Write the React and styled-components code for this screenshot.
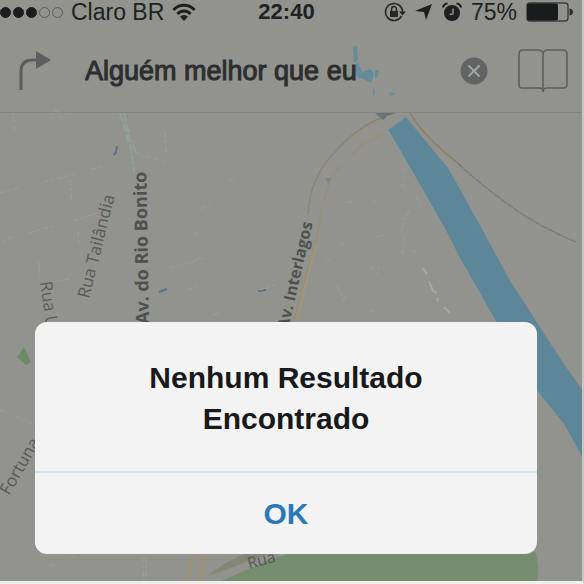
import React, { useState } from "react";
import styled, { createGlobalStyle } from "styled-components";

const signalDots = [true, true, true, false, false];

const faintStreets = [
  "M0 193 L20 188 M44 182 L76 174 M92 169 L106 166",
  "M30 233 L58 225 M74 221 L104 211",
  "M14 237 L2 242 M52 282 L70 279 M170 268 L194 262",
  "M71 180 L73 202 M79 232 L80 246 M166 132 L167 152",
  "M40 262 L41 278 M14 112 L16 130",
  "M50 118 l5 -6 l4 2 l3 4 l5 -4",
  "M58 112 l-3 -3 l5 2",
  "M202 209 l10 -4 M230 181 l8 -4 M196 232 l3 4 M194 261 l12 -3",
  "M214 315 l8 -2 M260 290 l16 -5 M188 290 l10 -4",
  "M374 202 l4 -2 M348 203 l6 -2 M376 237 l14 -3 M372 266 l6 8 l2 -7",
  "M338 286 l6 14 l4 -6 M327 258 l4 2 M342 246 l3 -4",
  "M404 168 l3 14 M402 184 l4 4 M410 210 l-8 20 l4 10 l-3 14",
  "M417 196 l6 12 M412 251 l6 1 M0 410 l8 2",
  "M16 416 l20 10 M143 557 l2 24 l4 0 M147 557 l0 20",
  "M370 310 l8 2 M50 566 l10 -2 M72 557 l8 -1",
];

const StatusBar = () => (
  <StatusRow>
    <StatusGroup>
      <Dots>
        {signalDots.map((filled, i) => (
          <Dot key={i} $filled={filled} />
        ))}
      </Dots>
      <span>Claro BR</span>
      <svg width="24" height="18" viewBox="0 0 24 18" fill="none" stroke="#1d1f20" strokeWidth="3">
        <path d="M1.500 7 C7 .8 17 .8 22.500 7" />
        <path d="M5.500 11 C9 7 15 7 18.500 11" />
        <path d="M8 13.500 Q12 10.500 16 13.500 L12 18 Z" fill="#1d1f20" stroke="none" />
      </svg>
    </StatusGroup>
    <Clock>22:40</Clock>
    <StatusGroup $end>
      <svg width="22" height="20" viewBox="0 0 22 20" fill="none" stroke="#252728">
        <path d="M17.500 14 A8.500 8.500 0 1 1 18.500 10" strokeWidth="1.600" />
        <path d="M15 9.500 h7 l-3.500 4 z" fill="#252728" stroke="none" />
        <rect x="6" y="9" width="8" height="6" fill="#252728" stroke="none" />
        <path d="M7.600 9 V7 a2.400 2.400 0 0 1 4.800 0 V9" strokeWidth="1.500" />
      </svg>
      <svg width="18" height="18" viewBox="0 0 18 18">
        <path d="M17 1 L11 17 L9 9 L0 8 Z" fill="#1d1f20" />
      </svg>
      <svg width="20" height="20" viewBox="0 0 20 20">
        <circle cx="10" cy="11" r="8" fill="#1d1f20" />
        <path d="M1 5.500 Q1.500 2 5.500 1.500 M19 5.500 Q18.500 2 14.500 1.500" fill="none" stroke="#1d1f20" strokeWidth="2" />
        <path d="M11 6.500 V12 L7.500 12.500" fill="none" stroke="#92938e" strokeWidth="1.400" />
      </svg>
      <span>75%</span>
      <svg width="47" height="20" viewBox="0 0 47 20">
        <rect x="1" y="1" width="41" height="18" rx="3" fill="none" stroke="#3d3f40" strokeWidth="1.400" />
        <rect x="1" y="1.500" width="31" height="17" rx="2" fill="#1a1c1d" />
        <path d="M43.500 6.500 Q47 7 47 10 Q47 13 43.500 13.500 Z" fill="#2b2d2e" />
      </svg>
    </StatusGroup>
  </StatusRow>
);

const SearchBar = () => {
  const [query, setQuery] = useState("Alguém melhor que eu");
  return (
    <SearchRow>
      <IconButton type="button" aria-label="Rotas">
        <svg width="34" height="40" viewBox="0 0 34 40">
          <path d="M3 39 V20 Q3 9 15 9 H22" fill="none" stroke="#5c5e5d" strokeWidth="3" />
          <path d="M18 0 L33 9 L18 18 Z" fill="#5c5e5d" />
        </svg>
      </IconButton>
      <SearchInput
        type="text"
        aria-label="Buscar"
        value={query}
        onChange={(e) => setQuery(e.target.value)}
      />
      <IconButton type="button" aria-label="Limpar" onClick={() => setQuery("")}>
        <svg width="28" height="28" viewBox="0 0 28 28">
          <circle cx="14" cy="14" r="13.500" fill="#626464" />
          <path d="M8.500 8.500 L19.500 19.500 M19.500 8.500 L8.500 19.500" stroke="#a3a49f" strokeWidth="2" />
        </svg>
      </IconButton>
      <IconButton type="button" aria-label="Favoritos">
        <svg width="50" height="44" viewBox="0 0 50 44" fill="none" stroke="#5d5f5e" strokeWidth="1.600">
          <path d="M25 4 Q24 1 20 1 H5 Q1 1 1 5 V36 Q1 39 4 39 H21 Q25 39 25 43 Q25 39 29 39 H45 Q49 39 49 35 V5 Q49 1 45 1 H30 Q26 1 25 4 V43" />
        </svg>
      </IconButton>
    </SearchRow>
  );
};

const StreetMap = () => (
  <MapCanvas viewBox="0 0 584 584" preserveAspectRatio="xMidYMid slice" aria-hidden="true">
    {/* park areas */}
    <path d="M222 581 L252 568 Q276 556 300 552 H536 Q541 564 538 584 H216 Z" fill="#788c70" />
    <path d="M18 357 L25 347 L32 362 L27 365 Z" fill="#6f8968" />

    {/* river */}
    <path
      d="M389 130 L407 117 L415 127 L449 168 L482 227 L510 279 L546 335 L567 367 L584 391 V458 L565 424 L537 389 L497 322 L460 257 L448 233 L415 175 Z"
      fill="#5e8699"
    />
    <path d="M389 130 L415 175 L448 233 L460 257 L497 322" fill="none" stroke="#a49f8c" strokeWidth="1" opacity=".6" />

    {/* stray blue patches of water */}
    <g fill="#648d9b">
      <path d="M354 47 l4 -1 l1 14 l-4 3 z" />
      <path d="M355 66 l4 -4 l4 10 l8 -3 l4 4 l-3 10 l-8 -4 l-6 -2 z" />
      <path d="M376 70 l4 0 l-2 8 l-2 0 z M374 86 l2 6 l-2 5 z M390 92 l6 2 l-4 2 z" />
    </g>
    <path d="M118 146 l-1 6 l-2 3 M160 292 l8 -3 M259 291 l8 -1" fill="none" stroke="#5d718a" strokeWidth="2" />

    {/* main avenue */}
    <path d="M309 215 Q311 176 337 151 Q359 126 389 115" fill="none" stroke="#8c8470" strokeWidth="1.500" />
    <path d="M294 324 L318 235 Q324 198 334 174 L344 165 M352 156 L364 143 L384 135" fill="none" stroke="#978e78" strokeWidth="1.500" />
    <path d="M298 318 L317 245" fill="none" stroke="#a09779" strokeWidth="2" />
    <path d="M188 584 L193 553 M201 584 L206 553" fill="none" stroke="#a1936d" strokeWidth="3" opacity=".7" />
    <path d="M376 113 L400 112 L388 116 L384 120 Z" fill="#6b7375" />
    <path d="M326 178 h7 l-4 6 z" fill="#7f8482" />
    <path d="M411 113 Q425 137 459 163" fill="none" stroke="#8f7f67" strokeWidth="1.500" />
    <path d="M459 163 Q480 184 520 212 Q548 230 577 242" fill="none" stroke="#7b7870" strokeWidth="1.200" strokeDasharray="7 1" />
    <path d="M250 552 Q224 562 209 576 L240 565 Q262 556 280 552 Z" fill="#858776" />

    {/* green lane going down to Rio Bonito */}
    <path d="M121 113 L126 130 L132 148 L135 172 M125 113 L130 136 L138 155" fill="none" stroke="#8fa399" strokeWidth="2" strokeDasharray="9 2" />
    <path d="M138 153 L166 162" fill="none" stroke="#989f98" strokeDasharray="6 3" />

    <g fill="none" stroke="#9c9e99" strokeWidth="1" strokeDasharray="6 2 3 3">
      {faintStreets.map((d) => (
        <path key={d} d={d} />
      ))}
    </g>
    <path d="M424 268 l4 6 M430 281 l4 10 l4 2 M438 298 l1 3 M445 307 l6 6" fill="none" stroke="#a5a6a1" strokeWidth="2" />

    <StreetName transform="translate(150 324) rotate(-91)" $size={18} $strong>
      Av. do Rio Bonito
    </StreetName>
    <StreetName transform="translate(90 299) rotate(-76)" $size={17}>
      Rua Tailândia
    </StreetName>
    <StreetName transform="translate(289 330) rotate(-77)" $size={16} $strong>
      Av. Interlagos
    </StreetName>
    <StreetName transform="translate(41 282) rotate(82)" $size={17}>
      Rua U
    </StreetName>
    <StreetName transform="translate(10 496) rotate(-60)" $size={17}>
      Fortuna
    </StreetName>
    <StreetName transform="translate(250 569) rotate(-15)" $size={16}>
      Rua
    </StreetName>
  </MapCanvas>
);

const App = () => {
  const [open, setOpen] = useState(true);

  return (
    <>
      <GlobalStyle />
      <Screen>
        <StreetMap />
        <Header>
          <StatusBar />
          <SearchBar />
        </Header>
        {open && (
          <Overlay>
            <Alert role="alertdialog" aria-labelledby="alert-title">
              <AlertTitle id="alert-title">
                Nenhum Resultado Encontrado
              </AlertTitle>
              <AlertButton type="button" onClick={() => setOpen(false)}>
                OK
              </AlertButton>
            </Alert>
          </Overlay>
        )}
      </Screen>
    </>
  );
};

const GlobalStyle = createGlobalStyle`
  * {
    box-sizing: border-box;
  }

  body {
    margin: 0;
    font-family: "Liberation Sans", Arial, sans-serif;
    color: #202223;
  }

  button,
  input {
    font-family: inherit;
    border: none;
    padding: 0;
    background: none;
  }
`;

const Screen = styled.main`
  position: relative;
  min-height: 100vh;
  overflow: hidden;
  background: #92938e;
  border-bottom: 3px solid #eef0ee;
  border-right: 2px solid #c5c7c5;
`;

const MapCanvas = styled.svg`
  position: absolute;
  inset: 0;
  width: 100%;
  height: 100vh;
`;

const StreetName = styled.text`
  font-family: "Open Sans", sans-serif;
  font-size: ${(p) => p.$size}px;
  font-weight: ${(p) => (p.$strong ? 700 : 400)};
  fill: ${(p) => (p.$strong ? "#50514f" : "#595a58")};
`;

const Header = styled.header`
  position: relative;
  border-bottom: 1px solid #84857f;
`;

const StatusRow = styled.div`
  display: grid;
  grid-template-columns: 1fr auto 1fr;
  align-items: center;
  height: 24px;
  padding-right: 9px;
  font-size: 23px;
  line-height: 24px;
`;

const StatusGroup = styled.div`
  display: flex;
  align-items: center;
  gap: ${(p) => (p.$end ? 9 : 8)}px;
  justify-content: ${(p) => (p.$end ? "flex-end" : "flex-start")};
  white-space: nowrap;
`;

const Dots = styled.div`
  display: flex;
  gap: 2px;
`;

const Dot = styled.span`
  width: 11px;
  height: 11px;
  border-radius: 50%;
  border: 1px solid ${(p) => (p.$filled ? "#1a1c1d" : "#5a5c5b")};
  background: ${(p) => (p.$filled ? "#1a1c1d" : "transparent")};
`;

const Clock = styled.time`
  font-size: 22px;
  font-weight: 700;
`;

const SearchRow = styled.div`
  display: flex;
  align-items: center;
  height: 88px;
  padding: 6px 14px 0 18px;
`;

const IconButton = styled.button`
  display: flex;
  flex: none;
  cursor: pointer;

  & + & {
    margin-left: 30px;
  }
`;

const SearchInput = styled.input`
  flex: 1;
  min-width: 0;
  margin: 0 16px 0 33px;
  font-size: 27px;
  line-height: 32px;
  color: #2c2e2f;
  -webkit-text-stroke: 1px #2c2e2f;
  outline: none;
`;

const Overlay = styled.div`
  position: absolute;
  inset: 0;
  display: flex;
  align-items: flex-end;
  padding: 0 45px 27px 35px;
`;

const Alert = styled.section`
  flex: 1;
  border-radius: 12px;
  background: #f3f3f3;
  overflow: hidden;
`;

const AlertTitle = styled.h1`
  margin: 0;
  padding: 35px 96px 32px;
  font-size: 30px;
  font-weight: 700;
  line-height: 41px;
  text-align: center;
  color: #17191a;
`;

const AlertButton = styled.button`
  display: block;
  width: 100%;
  height: 83px;
  border-top: 2px solid #cfe3e8;
  font-size: 30px;
  font-weight: 700;
  color: #2a78b8;
  cursor: pointer;
`;

export default App;
